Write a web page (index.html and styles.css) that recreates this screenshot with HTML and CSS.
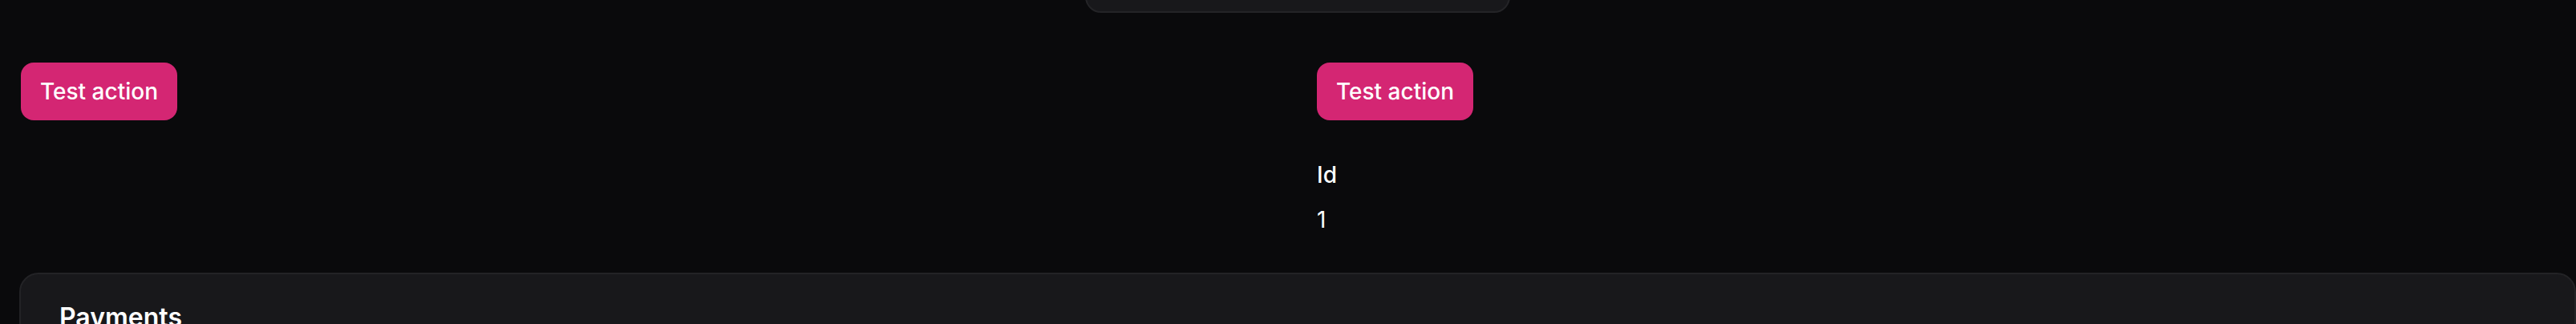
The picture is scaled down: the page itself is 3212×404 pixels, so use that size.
FILE: index.html
```html
<!DOCTYPE html>
<html lang="en">
<head>
<meta charset="utf-8">
<title>Test</title>
<link rel="stylesheet" href="styles.css">
</head>
<body>
<div class="page">
  <div class="top-tab"></div>
  <div class="grid">
    <div class="col">
      <button class="btn">Test action</button>
    </div>
    <div class="col">
      <button class="btn">Test action</button>
      <dl class="entry">
        <dt class="entry-label">Id</dt>
        <dd class="entry-value">1</dd>
      </dl>
    </div>
  </div>
  <section class="card">
    <h2 class="card-title">Payments</h2>
  </section>
</div>
</body>
</html>
```
FILE: styles.css
```css
html, body {
  margin: 0;
  padding: 0;
  background: #0a0a0c;
  overflow: hidden;
  height: 404px;
}
body {
  font-family: Inter, "Noto Sans", sans-serif;
  color: #fff;
}
.page {
  padding-left: 24px;
}
.top-tab {
  margin-top: -24px;
  margin-left: 1329px;
  width: 530px;
  height: 40px;
  box-sizing: border-box;
  background: #18181b;
  border: 2px solid #242427;
  border-radius: 24px;
}
.grid {
  margin-top: 62px;
  padding-left: 2px;
  display: grid;
  grid-template-columns: 1568px 1568px;
  column-gap: 48px;
  align-items: start;
}
.col {
  display: flex;
  flex-direction: column;
  align-items: flex-start;
}
.btn {
  height: 72px;
  padding: 0 24px;
  border: none;
  border-radius: 16px;
  background: #d42673;
  color: #fff;
  font-family: Inter, sans-serif;
  font-size: 28px;
  font-weight: 500;
  line-height: 40px;
}
.entry {
  margin: 44px 0 0;
  display: flex;
  flex-direction: column;
  gap: 8px;
}
.entry-label {
  font-size: 28px;
  line-height: 48px;
  font-weight: 500;
}
.entry-value {
  margin: 0;
  font-size: 28px;
  line-height: 48px;
  font-weight: 400;
}
.card {
  margin-top: 42px;
  width: 3188px;
  height: 200px;
  box-sizing: border-box;
  background: #18181b;
  border: 2px solid #232326;
  border-radius: 24px;
  padding: 30px 48px;
}
.card-title {
  margin: 0;
  font-size: 32px;
  line-height: 48px;
  font-weight: 600;
}
```
